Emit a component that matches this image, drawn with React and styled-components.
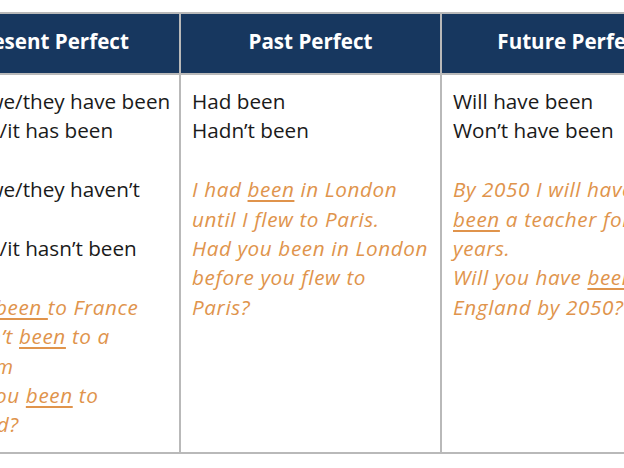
import React from "react";
import styled, { createGlobalStyle } from "styled-components";

const Global = createGlobalStyle`
  html, body { margin: 0; padding: 0; background: #ffffff; overflow: hidden; }
  body { font-family: "Open Sans", "Noto Sans", sans-serif; }
`;

const Page = styled.div`
  width: 624px;
  height: 468px;
  padding-top: 12px;
  box-sizing: border-box;
  overflow: hidden;
`;

const Table = styled.div`
  display: grid;
  grid-template-columns: repeat(3, 261px);
  grid-template-rows: 59px 379px;
  margin-left: -82px;
  width: max-content;
  border-top: 2px solid #b9b9b9;
  border-bottom: 2px solid #b9b9b9;
`;

const Head = styled.div`
  background: #17375f;
  color: #ffffff;
  font-weight: 700;
  font-size: 20.6px;
  display: flex;
  align-items: center;
  justify-content: center;
  padding-bottom: 5px;
  border-left: 2px solid #b9b9b9;
  white-space: nowrap;
`;

const Cell = styled.div`
  border-left: 2px solid #b9b9b9;
  border-top: 2px solid #b9b9b9;
  padding: 12px 11px;
  font-size: 20.7px;
  line-height: 29.4px;
  color: #1a1a1a;
  white-space: nowrap;
`;

const Para = styled.p`
  margin: 0 0 29.4px 0;
  color: ${(p) => (p.$example ? "#e0944c" : "#1a1a1a")};
  font-style: ${(p) => (p.$example ? "italic" : "normal")};
  letter-spacing: ${(p) => (p.$example ? "0.6px" : "0")};
`;

const U = styled.span`
  text-decoration: underline;
  text-decoration-thickness: 1.5px;
  text-underline-offset: 3px;
`;

export default function App() {
  return (
    <Page>
      <Global />
      <Table>
        <Head>Present Perfect</Head>
        <Head>Past Perfect</Head>
        <Head>Future Perfect</Head>
        <Cell>
          <Para>
            I/you/we/they have been
            <br />
            He/she/it has been
          </Para>
          <Para>
            I/you/we/they haven’t
            <br />
            been
            <br />
            He/she/it hasn’t been
          </Para>
          <Para $example>
            I have <U>been </U>to France
            <br />
            I haven’t <U>been</U> to a
            <br />
            museum
            <br />
            Have you <U>been</U> to
            <br />
            England?
          </Para>
        </Cell>
        <Cell>
          <Para>
            Had been
            <br />
            Hadn’t been
          </Para>
          <Para $example>
            I had <U>been</U> in London
            <br />
            until I flew to Paris.
            <br />
            Had you been in London
            <br />
            before you flew to
            <br />
            Paris?
          </Para>
        </Cell>
        <Cell>
          <Para>
            Will have been
            <br />
            Won’t have been
          </Para>
          <Para $example>
            By 2050 I will have
            <br />
            <U>been</U> a teacher for 10
            <br />
            years.
            <br />
            Will you have <U>been</U> to
            <br />
            England by 2050?
          </Para>
        </Cell>
      </Table>
    </Page>
  );
}
